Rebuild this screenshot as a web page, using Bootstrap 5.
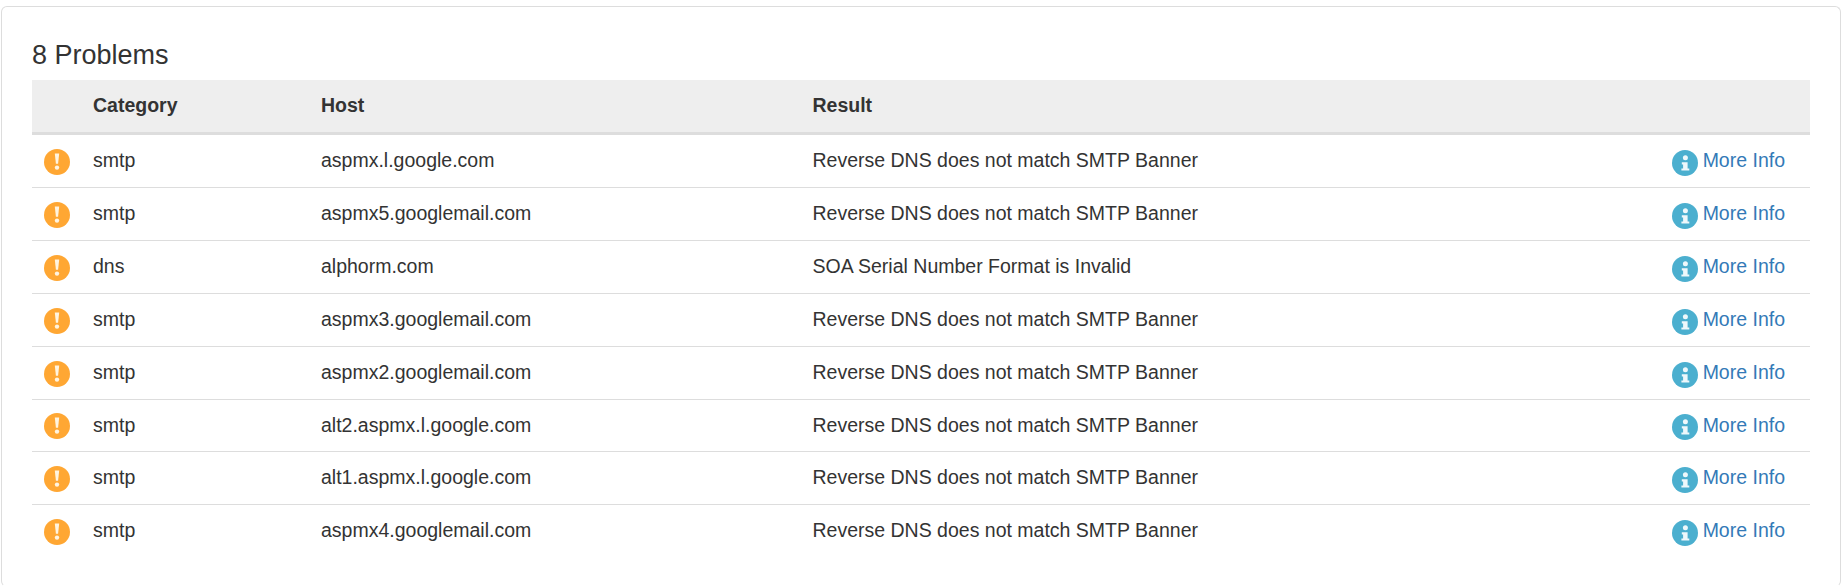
<!doctype html>
<html lang="en"><head><meta charset="utf-8"><title>Problems</title>
<link href="https://cdn.jsdelivr.net/npm/bootstrap@5.3.0/dist/css/bootstrap.min.css" rel="stylesheet">
<style>
html,body{height:100%;overflow:hidden}
body{font-family:"Liberation Sans",Arial,sans-serif;color:#333;background:#fff;font-size:19.5px;line-height:1.42857}
.outer-wrap{padding:6px 0 0 1px;height:587px}
.panel-box{height:581px;border:1px solid #ddd;border-bottom-color:#fff;border-radius:6px;padding:33px 30px 0 30px}
.panel-title{font-size:27px;font-weight:400;line-height:30px;margin:0 0 10.48px 0;color:#333}
.prob-table{table-layout:fixed;width:1778px;margin:0;color:#333;font-size:19.5px}
.prob-table th,.prob-table td{border-top:0;vertical-align:middle;line-height:1.42857;box-shadow:none;background:transparent;color:#333}
.prob-table thead th{background:#eee;border-bottom:3px solid #ddd;padding:12px 8px;font-weight:700}
.prob-table tbody td{border-bottom:1px solid #ddd;padding:12px 8px}
.prob-table tbody tr:last-child td{border-bottom:0}
.w-icon{width:53px}.w-cat{width:228px}.w-host{width:491.5px}.w-info{width:180px}
.prob-table tbody td.ico-cell{padding:0 0 0 12px}
.ico{width:26px;height:26px;display:block}
.ico-cell .ico{transform:translateY(1px)}
.info-link{color:#337ab7;text-decoration:none;white-space:nowrap}
.info-link .ico{margin-right:5px;transform:translateY(2px)}
.prob-table tbody td.info-cell{padding-right:25px}
</style></head><body>
<svg width="0" height="0" class="d-none"><defs>
<symbol id="warn" viewBox="0 0 26 26"><circle cx="13" cy="13" r="13" fill="#ffa733"/><path d="M10.8 4.5h4.4l-1.1 10.2h-2.2z" fill="#fff4e0"/><circle cx="13" cy="18.6" r="2.2" fill="#fff4e0"/></symbol>
<symbol id="info" viewBox="0 0 26 26"><circle cx="13" cy="13" r="13" fill="#4bafcf"/><circle cx="13.4" cy="7.8" r="2.5" fill="#eef8fb"/><path d="M9.8 12.2h5.8v6.2h1.7v2.2H9.4v-2.2h1.7v-4H9.8z" fill="#eef8fb"/></symbol>
</defs></svg>
<div class="outer-wrap">
<div class="panel-box">
<h3 class="panel-title">8 Problems</h3>
<table class="table prob-table">
<thead><tr><th class="w-icon"></th><th class="w-cat">Category</th><th class="w-host">Host</th><th>Result</th><th class="w-info"></th></tr></thead>
<tbody>
<tr><td class="ico-cell"><svg class="ico"><use href="#warn"/></svg></td><td>smtp</td><td>aspmx.l.google.com</td><td>Reverse DNS does not match SMTP Banner</td><td class="info-cell"><a class="info-link d-flex align-items-center justify-content-end" href="#"><svg class="ico"><use href="#info"/></svg>More Info</a></td></tr>
<tr><td class="ico-cell"><svg class="ico"><use href="#warn"/></svg></td><td>smtp</td><td>aspmx5.googlemail.com</td><td>Reverse DNS does not match SMTP Banner</td><td class="info-cell"><a class="info-link d-flex align-items-center justify-content-end" href="#"><svg class="ico"><use href="#info"/></svg>More Info</a></td></tr>
<tr><td class="ico-cell"><svg class="ico"><use href="#warn"/></svg></td><td>dns</td><td>alphorm.com</td><td>SOA Serial Number Format is Invalid</td><td class="info-cell"><a class="info-link d-flex align-items-center justify-content-end" href="#"><svg class="ico"><use href="#info"/></svg>More Info</a></td></tr>
<tr><td class="ico-cell"><svg class="ico"><use href="#warn"/></svg></td><td>smtp</td><td>aspmx3.googlemail.com</td><td>Reverse DNS does not match SMTP Banner</td><td class="info-cell"><a class="info-link d-flex align-items-center justify-content-end" href="#"><svg class="ico"><use href="#info"/></svg>More Info</a></td></tr>
<tr><td class="ico-cell"><svg class="ico"><use href="#warn"/></svg></td><td>smtp</td><td>aspmx2.googlemail.com</td><td>Reverse DNS does not match SMTP Banner</td><td class="info-cell"><a class="info-link d-flex align-items-center justify-content-end" href="#"><svg class="ico"><use href="#info"/></svg>More Info</a></td></tr>
<tr><td class="ico-cell"><svg class="ico"><use href="#warn"/></svg></td><td>smtp</td><td>alt2.aspmx.l.google.com</td><td>Reverse DNS does not match SMTP Banner</td><td class="info-cell"><a class="info-link d-flex align-items-center justify-content-end" href="#"><svg class="ico"><use href="#info"/></svg>More Info</a></td></tr>
<tr><td class="ico-cell"><svg class="ico"><use href="#warn"/></svg></td><td>smtp</td><td>alt1.aspmx.l.google.com</td><td>Reverse DNS does not match SMTP Banner</td><td class="info-cell"><a class="info-link d-flex align-items-center justify-content-end" href="#"><svg class="ico"><use href="#info"/></svg>More Info</a></td></tr>
<tr><td class="ico-cell"><svg class="ico"><use href="#warn"/></svg></td><td>smtp</td><td>aspmx4.googlemail.com</td><td>Reverse DNS does not match SMTP Banner</td><td class="info-cell"><a class="info-link d-flex align-items-center justify-content-end" href="#"><svg class="ico"><use href="#info"/></svg>More Info</a></td></tr>
</tbody></table>
</div></div>
</body></html>
